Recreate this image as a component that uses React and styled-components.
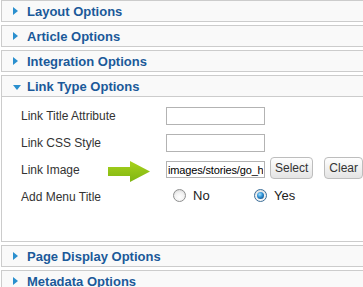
import React from 'react';
import styled, { createGlobalStyle } from 'styled-components';

const GlobalStyle = createGlobalStyle`
  html, body {
    margin: 0;
    padding: 0;
    background: #fff;
    overflow: hidden;
  }
  body {
    font-family: "Liberation Sans", Arial, sans-serif;
  }
`

const Page = styled.div`
  box-sizing: border-box;
  width: 100%;
  padding-left: 1px;
  display: flex;
  flex-direction: column;
  gap: 3px;
`

const PanelHeader = styled.div`
  height: 20px;
  display: flex;
  align-items: center;
  background: #f9f9f9;
  border: 1px solid #ccc;
  border-right: none;
  padding-left: 11px;
  color: #1b5999;
  font-size: 13px;
  font-weight: bold;
`

const Toggle = styled.span`
  width: 14px;
  height: 20px;
  display: flex;
  align-items: center;
  padding-top: ${p => (p.$open ? '2px' : '0')};
  box-sizing: border-box;
  &::before {
    content: '';
    width: 0;
    height: 0;
    ${p => p.$open
      ? `border-left: 4px solid transparent;
         border-right: 4px solid transparent;
         border-top: 5px solid #2a8fce;`
      : `border-top: 4px solid transparent;
         border-bottom: 4px solid transparent;
         border-left: 5px solid #2a8fce;`}
  }
`

const PanelBody = styled.div`
  border-left: 1px solid #ccc;
  border-bottom: 1px solid #ccc;
  padding: 5px 0 31px 19px;
`

const FieldGrid = styled.div`
  display: grid;
  grid-template-columns: 145px 1fr;
  grid-auto-rows: 27px;
  align-items: center;
`

const FieldLabel = styled.div`
  display: flex;
  align-items: center;
  font-size: 12px;
  color: #333;
`

const Pointer = styled.svg`
  margin-left: auto;
  margin-right: 16px;
  margin-top: 3px;
`

const FieldControls = styled.div`
  display: flex;
  align-items: center;
`

const TextInput = styled.input`
  width: 99px;
  height: ${p => (p.$short ? '17px' : '18px')};
  box-sizing: border-box;
  border: 1px solid #b3b3b3;
  padding: 0 1px;
  margin: 0;
  font-family: "Liberation Sans", Arial, sans-serif;
  font-size: 11px;
  letter-spacing: -0.15px;
  color: #000;
  background: #fff;
  outline: none;
`

const SmallButton = styled.button`
  height: 22px;
  margin: -3px 0 0 ${p => p.$gap}px;
  padding: 0 4px;
  border: 1px solid #bdbdbd;
  border-radius: 4px;
  background: linear-gradient(#fefefe, #e4e4e4);
  font-family: "Liberation Sans", Arial, sans-serif;
  font-size: 12px;
  color: #333;
`

const RadioGroup = styled.div`
  display: flex;
  align-items: center;
  padding-left: 7px;
  margin-top: -3px;
`

const RadioOption = styled.label`
  min-width: 81px;
  display: flex;
  align-items: center;
  gap: 7px;
  font-size: 13px;
  color: #222;
`

const RadioDot = styled.span`
  width: 13px;
  height: 13px;
  box-sizing: border-box;
  border-radius: 50%;
  border: 1px solid ${p => (p.$checked ? '#3d6f99' : '#8e8f8f')};
  background: radial-gradient(circle at 50% 65%, #ffffff 0%, #f2f2f2 50%, #cfcfcf 100%);
  display: flex;
  align-items: center;
  justify-content: center;
  &::after {
    content: '';
    display: ${p => (p.$checked ? 'block' : 'none')};
    width: 7px;
    height: 7px;
    border-radius: 50%;
    background: radial-gradient(circle at 40% 35%, #a6e4ff 0%, #2d8ed3 45%, #0c3b68 100%);
  }
`

function Header({ title, open }) {
  return (
    <PanelHeader>
      <Toggle $open={open} />
      {title}
    </PanelHeader>
  )
}

function Radio({ checked, children }) {
  return (
    <RadioOption>
      <RadioDot $checked={checked} />
      {children}
    </RadioOption>
  )
}

export default function App() {
  return (
    <>
      <GlobalStyle />
      <Page>
        <Header title="Layout Options" />
        <Header title="Article Options" />
        <Header title="Integration Options" />
        <div>
          <Header title="Link Type Options" open />
          <PanelBody>
            <FieldGrid>
              <FieldLabel>Link Title Attribute</FieldLabel>
              <FieldControls><TextInput defaultValue="" /></FieldControls>

              <FieldLabel>Link CSS Style</FieldLabel>
              <FieldControls><TextInput defaultValue="" /></FieldControls>

              <FieldLabel>
                Link Image
                <Pointer width="42" height="21" viewBox="0 0 42 21">
                  <defs>
                    <linearGradient id="arrowFill" x1="0" y1="0" x2="0" y2="1">
                      <stop offset="0" stopColor="#a8d21c" />
                      <stop offset="1" stopColor="#7fb512" />
                    </linearGradient>
                  </defs>
                  <polygon points="0,6 22,6 22,0 42,10.5 22,21 22,15 0,15" fill="url(#arrowFill)" />
                </Pointer>
              </FieldLabel>
              <FieldControls>
                <TextInput $short defaultValue="images/stories/go_home.png" />
                <SmallButton $gap={5}>Select</SmallButton>
                <SmallButton $gap={11}>Clear</SmallButton>
              </FieldControls>

              <FieldLabel>Add Menu Title</FieldLabel>
              <RadioGroup>
                <Radio>No</Radio>
                <Radio checked>Yes</Radio>
              </RadioGroup>
            </FieldGrid>
          </PanelBody>
        </div>
        <Header title="Page Display Options" />
        <Header title="Metadata Options" />
      </Page>
    </>
  )
}
